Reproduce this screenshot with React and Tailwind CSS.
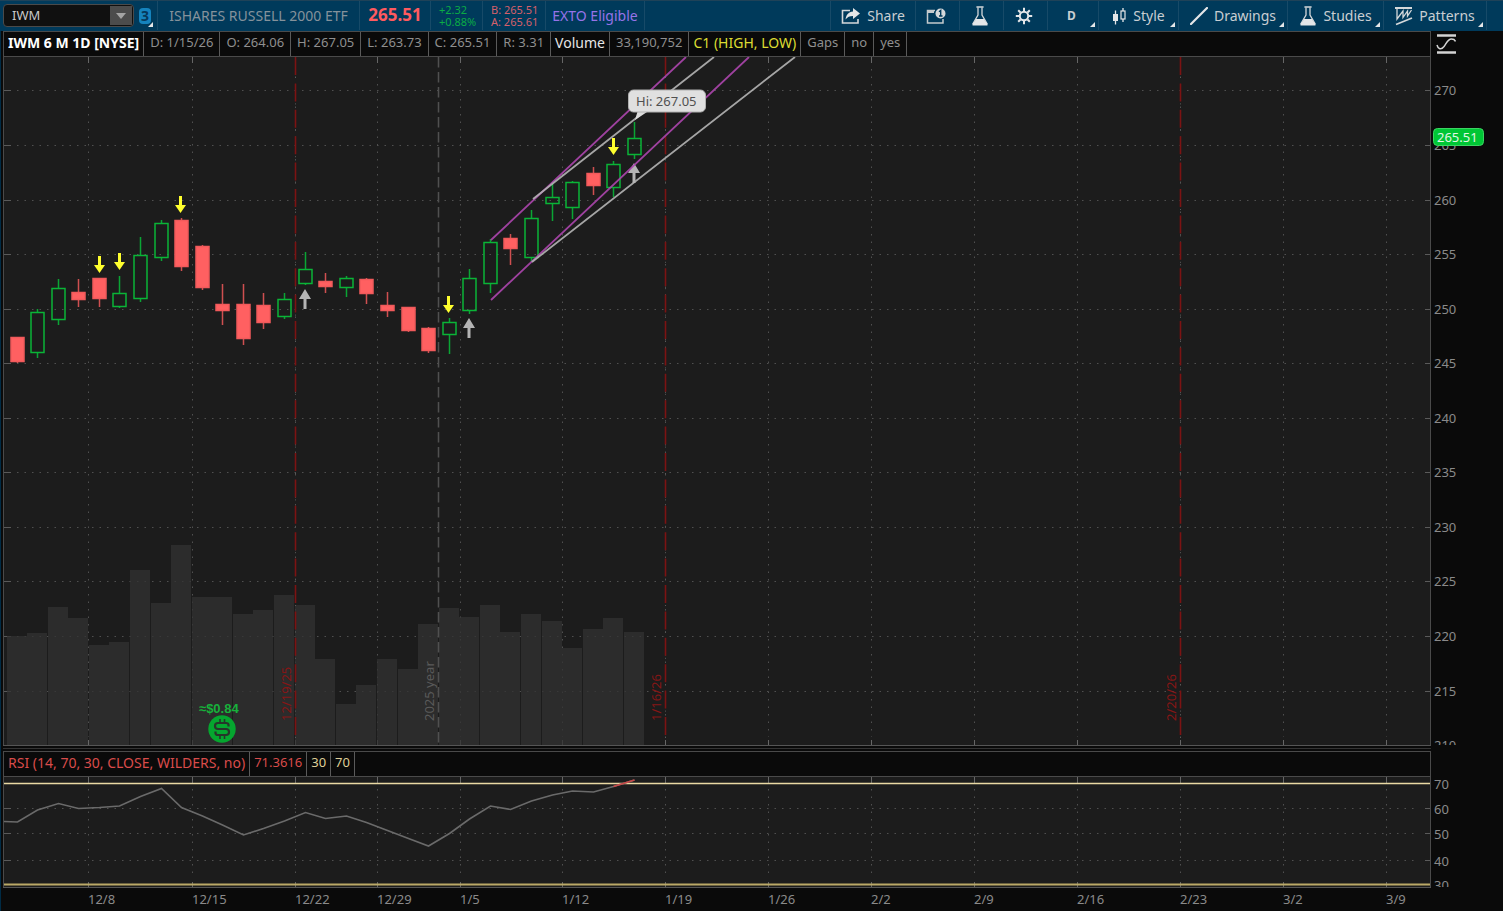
import React from 'react';

// [direction, high, body top, body bottom, low, volume top], one row per session
const SESSIONS = [
  ['down', 337, 337, 362, 363, 636],
  ['up', 309, 312, 353, 358, 633],
  ['up', 279, 288, 320, 325, 607],
  ['down', 279, 292, 300, 307, 618],
  ['down', 278, 278, 299, 307, 645],
  ['up', 276, 293, 307, 308, 642],
  ['up', 237, 255, 299, 302, 570],
  ['up', 220, 223, 258, 261, 603],
  ['down', 218, 220, 267, 271, 545],
  ['down', 245, 246, 288, 290, 597],
  ['down', 284, 304, 311, 325, 597],
  ['down', 284, 304, 339, 345, 614],
  ['down', 293, 305, 323, 329, 610],
  ['up', 293, 299, 317, 319, 595],
  ['up', 252, 269, 284, 285, 605],
  ['down', 273, 281, 287, 293, 659],
  ['up', 276, 278, 288, 297, 704],
  ['down', 278, 279, 294, 304, 685],
  ['down', 292, 305, 311, 317, 659],
  ['down', 307, 307, 331, 332, 669],
  ['down', 327, 328, 351, 353, 624],
  ['up', 318, 322, 335, 354, 608],
  ['up', 269, 278, 311, 314, 617],
  ['up', 239, 242, 284, 293, 605],
  ['down', 234, 238, 249, 265, 632],
  ['up', 210, 218, 258, 262, 614],
  ['up', 184, 197, 204, 221, 621],
  ['up', 181, 182, 208, 219, 648],
  ['down', 167, 173, 186, 195, 629],
  ['up', 161, 164, 188, 197, 618],
  ['up', 122, 138, 155, 159, 632],
];

const RSI = [
  822, 810, 803.5, 808.5, 807.5, 806, 796.5, 788.5, 807.5, 816, 825, 835, 828.5, 821, 812.5,
  818.5, 816, 822.5, 830.5, 838.5, 846, 833.5, 819, 806, 809.5, 801, 795, 791, 792, 786.5, 780,
];

const DATES = [
  ['12/8', 88], ['12/15', 192], ['12/22', 295], ['12/29', 377], ['1/5', 460], ['1/12', 562], ['1/19', 665],
  ['1/26', 768], ['2/2', 871], ['2/9', 974], ['2/16', 1077], ['2/23', 1180], ['3/2', 1283], ['3/9', 1386],
];

const PRICES = [
  [270, 90], [265, 145], [260, 200], [255, 254], [250, 309], [245, 363], [240, 418],
  [235, 472], [230, 527], [225, 581], [220, 636], [215, 691], [210, 745],
];

const RSI_LEVELS = [[70, 783], [60, 808], [50, 833], [40, 860], [30, 884]];

const EXPIRATIONS = [['12/19/25', 295], ['1/16/26', 665], ['2/20/26', 1180]];
const SELL_ARROWS = [[99, 273], [119, 270], [180, 213], [448, 313], [613, 155]];
const BUY_ARROWS = [[305, 289], [469, 318], [634, 163]];

const sessionX = (i) => Math.floor(17 + 20.58 * i) + 0.5;

const Corner = () => (
  <svg className="absolute right-[3px] bottom-[3px]" width="5" height="5" aria-hidden="true">
    <path d="M5 0V5H0Z" fill="#e4e6e8" />
  </svg>
);

const ToolButton = ({ label, corner, className, children }) => (
  <button
    type="button"
    aria-label={label}
    className={`relative flex h-full shrink-0 items-center justify-center gap-1.5 border-l border-[#174a68] text-[#c9ced2] ${className}`}
  >
    {children}
    {corner && <Corner />}
  </button>
);

const ShareIcon = () => (
  <svg width="20" height="18" viewBox="0 0 20 18" fill="none">
    <path d="M9 3.5H1.5V16H17V12" stroke="#d4d8da" strokeWidth="1.6" />
    <path d="M12 1L19 6.5L12 12V9C8.5 9 6.5 10 4.5 12.5C5 8 7.5 4.8 12 4.5Z" fill="#e4e6e8" />
  </svg>
);

const NoteIcon = () => (
  <svg width="20" height="18" viewBox="0 0 20 18" fill="none">
    <path d="M9 3.5H1.5V16H17V12" stroke="#c4cacd" strokeWidth="1.5" />
    <path d="M1.5 5H8" stroke="#c4cacd" strokeWidth="2" />
    <circle cx="14.5" cy="6.5" r="5" fill="#d4d8da" />
    <path d="M13 4.8L14.7 3.5V8.5M13 9H16.5" stroke="#003a5b" strokeWidth="1.4" />
  </svg>
);

const FlaskIcon = () => (
  <svg width="18" height="20" viewBox="0 0 18 20" fill="none">
    <path d="M6 1H12" stroke="#d4d8da" strokeWidth="1.6" strokeLinecap="round" />
    <path d="M7 1.5V9L2 17.5H16L11 9V1.5" stroke="#d4d8da" strokeWidth="1.3" />
    <path d="M5 13H13L16.5 18.5Q17 19.5 16 19.5H2Q1 19.5 1.5 18.5Z" fill="#e4e6e8" />
  </svg>
);

const GearIcon = () => (
  <svg width="18" height="18" viewBox="0 0 18 18" fill="none" stroke="#e4e6e8">
    <circle cx="9" cy="9" r="4.2" strokeWidth="2" />
    <path
      d="M9 .8V4M9 14V17.2M.8 9H4M14 9H17.2M3.2 3.2L5.5 5.5M12.5 12.5L14.8 14.8M14.8 3.2L12.5 5.5M5.5 12.5L3.2 14.8"
      strokeWidth="2"
    />
  </svg>
);

const CandlesIcon = () => (
  <svg width="15" height="18" viewBox="0 0 15 18" fill="none">
    <path d="M3.5 3.5V17.5" stroke="#e4e6e8" strokeWidth="1.3" />
    <rect x="1" y="7" width="5" height="7" fill="#e4e6e8" />
    <path d="M11 1V4M11 12V15" stroke="#e4e6e8" strokeWidth="1.3" />
    <rect x="9" y="4" width="4" height="8" stroke="#e4e6e8" strokeWidth="1.2" />
  </svg>
);

const LineIcon = () => (
  <svg width="18" height="18" viewBox="0 0 18 18">
    <path d="M1 17L17 1" stroke="#e4e6e8" strokeWidth="2.2" strokeLinecap="round" />
  </svg>
);

const PatternsIcon = () => (
  <svg width="18" height="20" viewBox="0 0 18 20" fill="none" stroke="#d4d8da">
    <path d="M0 2H17M1 18.5L17 12" strokeWidth="1.8" />
    <path d="M2 3V13L8 5V11.5L12.5 5V10L16.5 4" strokeWidth="1.3" />
  </svg>
);

const OscillatorIcon = () => (
  <svg width="20" height="20" viewBox="0 0 20 20" fill="none" stroke="#d4d4d4">
    <path d="M1 1.5H20M1 18.5H20" strokeWidth="2.4" />
    <path d="M1 11C2 15 5 16.5 8 12.5C11 8 12 5 15.5 5C18 5 19 6 19.5 7.5" strokeWidth="1.5" />
  </svg>
);

const Toolbar = () => (
  <header className="flex h-[31px] items-stretch border-t border-[#1f4258] bg-[#003a5b] pb-px text-sm">
    <div className="flex w-[157px] shrink-0 items-center pl-[3px]">
      <div className="flex h-[23px] w-[131px] items-center rounded-sm border border-[#4a4a4a] bg-[#101010] pr-px">
        <input
          aria-label="Symbol"
          defaultValue="IWM"
          className="w-full min-w-0 bg-transparent pl-2 text-[13px] text-[#c8c8c8] outline-none"
        />
        <button type="button" aria-label="Symbol list" className="flex h-[19px] w-[22px] shrink-0 items-center justify-center bg-[#4c4c4c]">
          <svg width="10" height="6"><path d="M0 0H10L5 6Z" fill="#a4a4a4" /></svg>
        </button>
      </div>
      <button type="button" aria-label="Link colour 3" className="relative ml-[3px] h-full w-[19px]">
        <span className="ml-[2px] block w-3 rounded-sm bg-[#1583bd] text-center text-sm leading-4 font-bold text-[#06385a]">3</span>
        <Corner />
      </button>
    </div>
    <div className="flex w-[202px] shrink-0 items-center justify-center border-l border-[#174a68] text-[#85929b]">
      ISHARES RUSSELL 2000 ETF
    </div>
    <div className="flex w-[71px] shrink-0 items-center justify-center border-l border-[#174a68] text-[17px] font-bold text-[#ff5a5f]">
      265.51
    </div>
    <div className="flex w-[52px] shrink-0 flex-col justify-center border-l border-[#174a68] pl-2 text-[11px] leading-3 text-[#0bab45]">
      <span>+2.32</span>
      <span>+0.88%</span>
    </div>
    <div className="flex w-[63px] shrink-0 flex-col justify-center border-l border-[#174a68] pl-2 text-[11px] leading-3 text-[#d6606a]">
      <span>B: 265.51</span>
      <span>A: 265.61</span>
    </div>
    <div className="flex w-[100px] shrink-0 items-center justify-center border-x border-[#174a68] text-[#9673e8]">EXTO Eligible</div>

    <nav className="ml-auto flex items-stretch">
      <ToolButton className="w-[85px]"><ShareIcon />Share</ToolButton>
      <ToolButton label="Notes" className="w-[44px] pr-[3px]"><NoteIcon /></ToolButton>
      <ToolButton label="Quick studies" className="w-[44px] pr-[3px]"><FlaskIcon /></ToolButton>
      <ToolButton label="Settings" className="w-[44px] pr-[3px]"><GearIcon /></ToolButton>
      <ToolButton corner className="w-[51px] pr-[3px] text-xs font-bold">D</ToolButton>
      <ToolButton corner className="w-[80px]"><CandlesIcon />Style</ToolButton>
      <ToolButton corner className="w-[109px]"><LineIcon />Drawings</ToolButton>
      <ToolButton corner className="w-[96px]"><FlaskIcon />Studies</ToolButton>
      <ToolButton corner className="w-[103px]"><PatternsIcon />Patterns</ToolButton>
      <div className="w-[17px] border-l border-[#174a68]" />
    </nav>
  </header>
);

const Cell = ({ className = 'px-1.5 text-[#8f8f8f]', children }) => (
  <span className={`flex items-center border-r border-[#5a5a5a] pb-0.5 whitespace-nowrap ${className}`}>{children}</span>
);

const HorizontalGrid = ({ levels }) =>
  levels.map(([label, y]) => (
    <g key={label}>
      <path d={`M17 ${y + 0.5}H1418`} stroke="#505050" strokeDasharray="1.5 6" />
      <path d={`M4 ${y + 0.5}h7M1425 ${y + 0.5}h5`} stroke="#5a5a5a" />
    </g>
  ));

const VerticalGrid = ({ top, bottom }) =>
  DATES.map(([label, x]) => (
    <g key={label}>
      <path d={`M${x + 0.5} ${top + 12}V${bottom - 8}`} stroke="#505050" strokeDasharray="1.5 6" />
      <path d={`M${x + 0.5} ${top}v6M${x + 0.5} ${bottom}v-5`} stroke="#666" />
    </g>
  ));

const Candle = ({ x, session: [direction, high, top, bottom, low] }) => {
  const up = direction === 'up';
  return (
    <g stroke={up ? '#0aa534' : '#cf4f50'}>
      <path d={`M${x} ${high}V${top}M${x} ${bottom}V${low}`} strokeWidth="1.5" />
      <rect
        x={x - 6.5}
        y={top + 0.5}
        width="13"
        height={bottom - top - 1}
        fill={up ? 'none' : '#ff6061'}
        stroke={up ? '#0ab437' : '#f15a5b'}
        strokeWidth="1.5"
      />
    </g>
  );
};

const PriceChart = () => (
  <svg className="h-[688px] w-full" role="img" aria-label="IWM daily price chart">
    <g transform="translate(-4 -57)" fill="none">
      <HorizontalGrid levels={PRICES.slice(0, 12)} />
      <VerticalGrid top={57} bottom={745} />

      {/* Volume */}
      {SESSIONS.map((session, i) => (
        <rect key={i} x={sessionX(i) - 10.5} y={session[5]} width="20" height={745 - session[5]} fill="#313131" fillOpacity="0.75" />
      ))}

      {/* Year boundary and option expirations */}
      <path d="M438.5 57V745" stroke="#505050" strokeWidth="1.5" strokeDasharray="10.5 4.5" />
      <text transform="translate(434 721) rotate(-90)" fill="#5a5a5a">2025 year</text>
      {EXPIRATIONS.map(([label, x]) => (
        <g key={label}>
          <path d={`M${x + 0.5} 57V738`} stroke="#7c1313" strokeWidth="1.6" strokeDasharray="18 8.4" />
          <path d={`M${x + 0.5} 77V738`} stroke="#5a5a5a" strokeDasharray="1 25.4" />
          <text transform={`translate(${x - 4} 721) rotate(-90)`} fill="#861616">{label}</text>
        </g>
      ))}

      {SESSIONS.map((session, i) => (
        <Candle key={i} x={sessionX(i)} session={session} />
      ))}

      {SELL_ARROWS.map(([x, y]) => (
        <path key={x} d={`M${x - 1} ${y - 17}h3v9h4l-5.5 8l-5.5-8h4Z`} fill="#ffff2e" />
      ))}
      {BUY_ARROWS.map(([x, y]) => (
        <path key={x} d={`M${x} ${y}l6 10h-4.5v10h-3v-10h-4.5Z`} fill="#b4b4b4" />
      ))}

      {/* Regression channels */}
      <g strokeWidth="1.8" strokeOpacity="0.9">
        <path d="M491 240L686 57M491 300L749 57" stroke="#ad46ae" />
        <path d="M533 199L714 57M532 262L795 57" stroke="#b5b5b5" />
      </g>

      {/* High of the range */}
      <path d="M635 120L638 110H650Z" fill="#dcdcdc" />
      <rect x="628.5" y="90" width="77" height="22" rx="5" fill="#e0e0e0" stroke="#b0b0b0" />
      <text x="636" y="106" fill="#505050">Hi: 267.05</text>

      {/* Dividend */}
      <text x="199" y="713" fill="#17b13b" className="font-['Liberation_Sans'] text-[13px] font-bold">≈$0.84</text>
      <circle cx="222" cy="729" r="13.7" fill="#05a62f" />
      <path
        d="M228.5 726.5V725Q228.5 723 226 723H218Q215 723 215 726T218 729H226Q229 729 229 732T226 735H218Q215.5 735 215.5 733V731.5"
        stroke="#26352a"
        strokeWidth="2.2"
      />
      <path d="M220 719V723M224.5 719V723M220 735V739M224.5 735V739" stroke="#26352a" strokeWidth="1.6" />
    </g>
  </svg>
);

const PriceAxis = () => (
  <svg className="h-[688px] w-[72px] shrink-0" role="img" aria-label="Price axis">
    <g transform="translate(0 -57)">
      {PRICES.map(([price, y]) => (
        <text key={price} x="3" y={y + 5} fill="#8a8a8a">{price}</text>
      ))}
      <rect x="2.5" y="128.5" width="50" height="17" rx="4" fill="#00c635" stroke="#3bd562" />
      <text x="6" y="142" fill="#e0f6e4">265.51</text>
    </g>
  </svg>
);

const RsiChart = () => {
  const points = RSI.map((y, i) => `${sessionX(i)},${y}`).join(' ');
  return (
    <svg className="h-[110px] w-full" role="img" aria-label="Relative strength index">
      <g transform="translate(-4 -777)" fill="none">
        <HorizontalGrid levels={RSI_LEVELS.slice(1, 4)} />
        <VerticalGrid top={777} bottom={887} />
        <path d="M4 783.5H1430" stroke="#ead9a4" strokeWidth="1.5" />
        <path d="M4 884.5H1430" stroke="#bba967" strokeWidth="2" />
        <polyline points={`4,821.5 ${points}`} stroke="#6a6a6a" strokeWidth="1.6" />
        <path d={`M${sessionX(29)} 786.5L${sessionX(30)} 780`} stroke="#c94848" strokeWidth="1.8" />
      </g>
    </svg>
  );
};

const RsiAxis = () => (
  <svg className="h-[110px] w-[72px] shrink-0" role="img" aria-label="RSI axis">
    <g transform="translate(0 -777)" fill="#8a8a8a">
      {RSI_LEVELS.map(([level, y]) => (
        <text key={level} x="3" y={y + 6}>{level}</text>
      ))}
    </g>
  </svg>
);

const App = () => (
  <div className="flex min-h-screen flex-col overflow-hidden bg-[#0a0a0a] font-['Noto_Sans',sans-serif] text-[13px] text-[#8f8f8f]">
    <Toolbar />
    <main className="flex flex-1 flex-col border-l border-[#002b45] pl-[2px]">
      <div className="flex h-[26px]">
        <div className="flex min-w-0 flex-1 overflow-hidden border border-[#4a4a4a]">
          <Cell className="px-1 text-sm font-bold text-white">IWM 6 M 1D [NYSE]</Cell>
          <Cell>D: 1/15/26</Cell>
          <Cell>O: 264.06</Cell>
          <Cell>H: 267.05</Cell>
          <Cell>L: 263.73</Cell>
          <Cell>C: 265.51</Cell>
          <Cell>R: 3.31</Cell>
          <Cell className="px-1 text-sm text-[#e6e6e6]">Volume</Cell>
          <Cell>33,190,752</Cell>
          <Cell className="px-1 text-sm text-[#dcdc32]">C1 (HIGH, LOW)</Cell>
          <Cell>Gaps</Cell>
          <Cell>no</Cell>
          <Cell>yes</Cell>
        </div>
        <button type="button" aria-label="Studies on axis" className="flex w-[72px] shrink-0 items-center pl-[5px]">
          <OscillatorIcon />
        </button>
      </div>

      <section className="flex">
        <div className="min-w-0 flex-1 border-x border-[#4a4a4a] bg-[#1c1c1c]"><PriceChart /></div>
        <PriceAxis />
      </section>

      <div className="mr-[72px] h-[6px] border-t border-[#555]">
        <div className="h-[3px] border-b border-[#333]" />
      </div>

      <div className="mr-[72px] flex h-[26px] border border-[#4a4a4a]">
        <Cell className="px-1 text-sm text-[#d94c4a]">RSI (14, 70, 30, CLOSE, WILDERS, no)</Cell>
        <Cell className="px-1 text-[#d94c4a]">71.3616</Cell>
        <Cell className="px-1 text-[#dfcf98]">30</Cell>
        <Cell className="px-1 text-[#dfcf98]">70</Cell>
      </div>

      <section className="flex">
        <div className="min-w-0 flex-1 border-x border-[#4a4a4a] bg-[#1c1c1c]"><RsiChart /></div>
        <RsiAxis />
      </section>

      <div className="mr-[72px] border-t border-[#555]">
        <svg className="h-[23px] w-full" role="img" aria-label="Date axis">
          {DATES.map(([date, x]) => (
            <text key={date} x={x - 3} y="16" fill="#8a8a8a">{date}</text>
          ))}
        </svg>
      </div>
    </main>
  </div>
);

export default App;
